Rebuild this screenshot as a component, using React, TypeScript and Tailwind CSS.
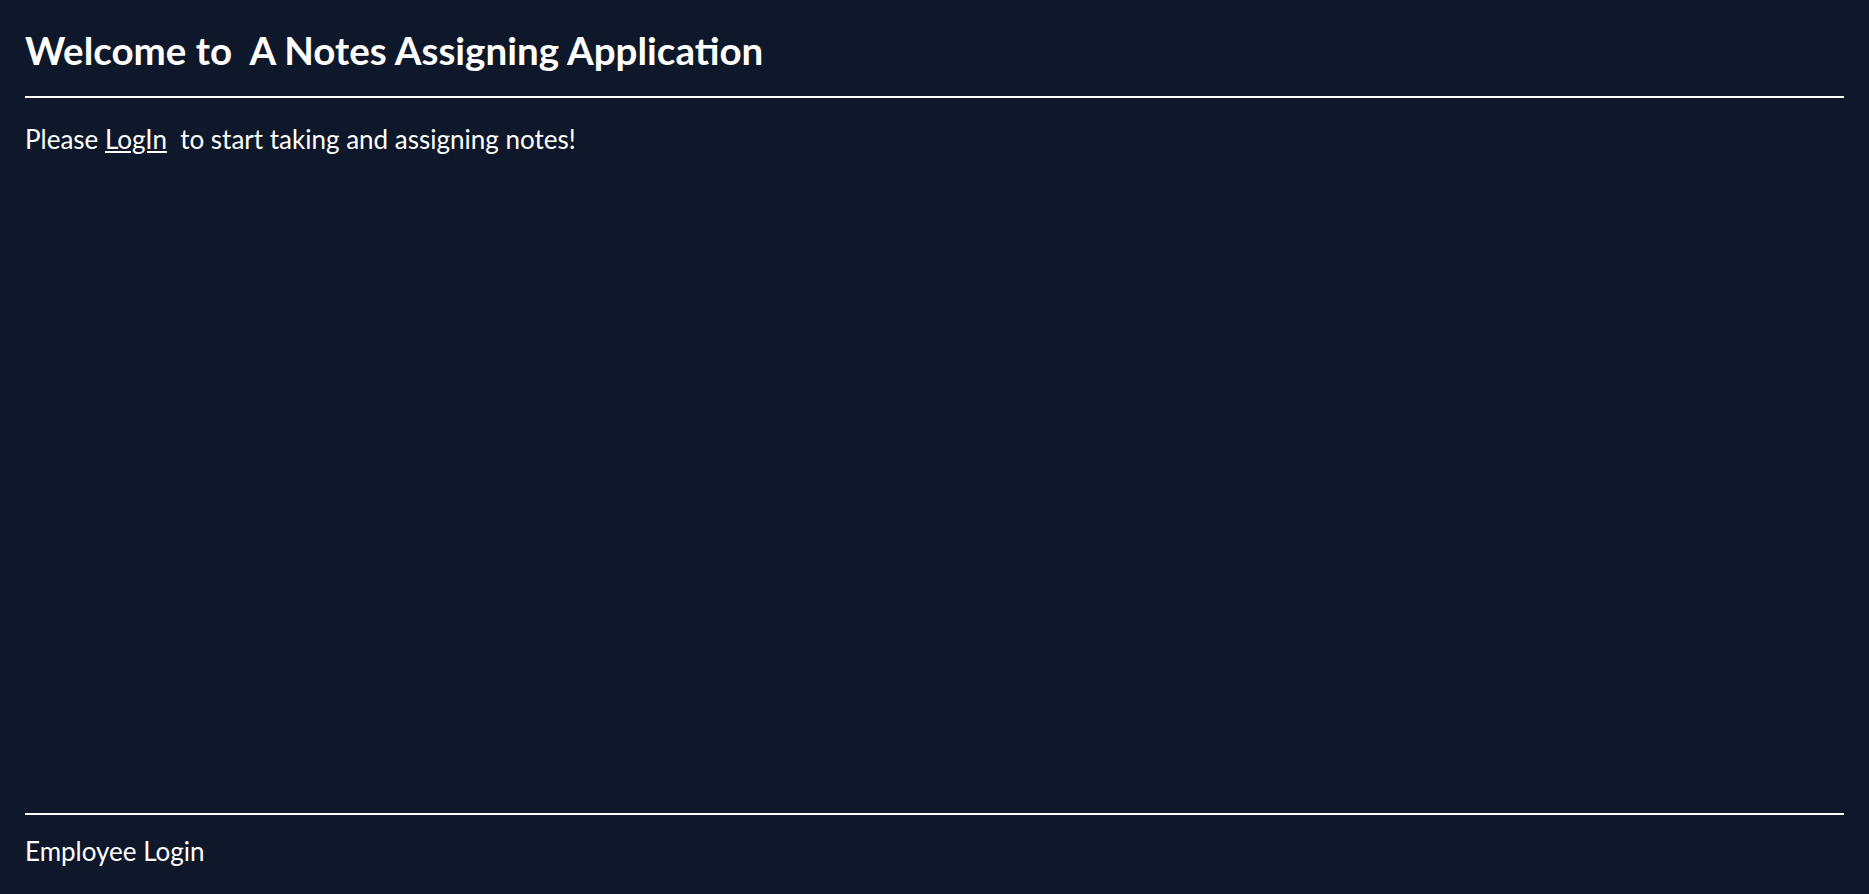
export default function App() {
  return (
    <div
      className="flex h-screen flex-col bg-[#0f172a] px-[25px] text-white"
      style={{ fontFamily: 'Lato, "Open Sans", sans-serif' }}
    >
      <header className="border-b-2 border-white pt-[31px] pb-[26px]">
        <h1 className="text-[38.5px] leading-[39px] font-bold whitespace-pre">Welcome to  A Notes Assigning Application</h1>
      </header>
      <main className="flex-1 pt-[28px]">
        <p className="text-[26px] leading-none whitespace-pre">
          Please <a href="#" className="underline">LogIn</a>  to start taking and assigning notes!
        </p>
      </main>
      <footer className="border-t-2 border-white pt-[23px] pb-[30px]">
        <p className="text-[26px] leading-none">Employee Login</p>
      </footer>
    </div>
  )
}
